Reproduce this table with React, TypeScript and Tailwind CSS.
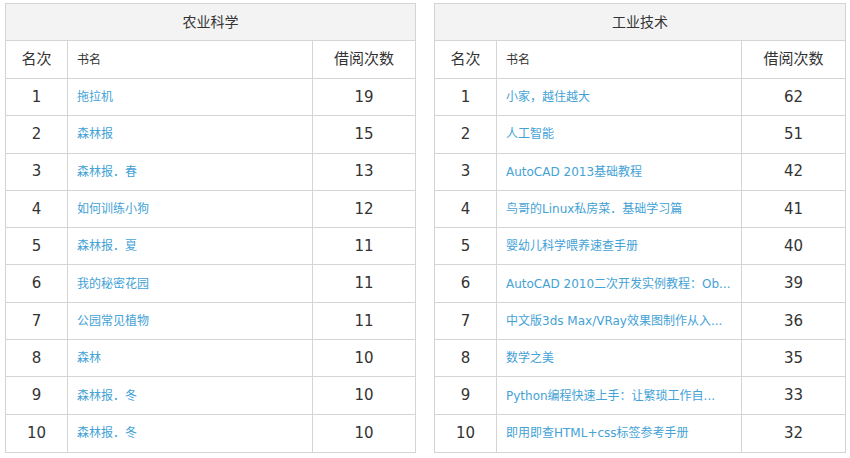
import React from "react";

type Row = [number, string, number];

const agri: Row[] = [
  [1, "拖拉机", 19],
  [2, "森林报", 15],
  [3, "森林报．春", 13],
  [4, "如何训练小狗", 12],
  [5, "森林报．夏", 11],
  [6, "我的秘密花园", 11],
  [7, "公园常见植物", 11],
  [8, "森林", 10],
  [9, "森林报．冬", 10],
  [10, "森林报．冬", 10],
];

const indu: Row[] = [
  [1, "小家，越住越大", 62],
  [2, "人工智能", 51],
  [3, "AutoCAD 2013基础教程", 42],
  [4, "鸟哥的Linux私房菜．基础学习篇", 41],
  [5, "婴幼儿科学喂养速查手册", 40],
  [6, "AutoCAD 2010二次开发实例教程：Ob...", 39],
  [7, "中文版3ds Max/VRay效果图制作从入...", 36],
  [8, "数学之美", 35],
  [9, "Python编程快速上手：让繁琐工作自...", 33],
  [10, "即用即查HTML+css标签参考手册", 32],
];

const font = { fontFamily: "Tahoma, 'DejaVu Sans', 'Noto Sans CJK SC', sans-serif" };

function Table({ title, rows, w }: { title: string; rows: Row[]; w: string }) {
  return (
    <div className={`${w} border border-[#d4d4d4] text-[#333]`}>
      <div className="h-[37px] border-b border-[#d4d4d4] bg-[#f3f3f3] flex items-center justify-center text-[14px]">
        {title}
      </div>
      <div className="h-[38px] border-b border-[#d4d4d4] flex text-[15px]">
        <div className="w-[62px] border-r border-[#d4d4d4] flex items-center justify-center">名次</div>
        <div className="w-[245px] border-r border-[#d4d4d4] flex items-center pl-[9px] text-[12px]">书名</div>
        <div className="flex-1 flex items-center justify-center">借阅次数</div>
      </div>
      {rows.map((r, i) => (
        <div
          key={i}
          className={`h-[37.3px] flex ${i < rows.length - 1 ? "border-b border-[#d4d4d4]" : ""}`}
        >
          <div className="w-[62px] border-r border-[#d4d4d4] flex items-center justify-center text-[15px]">{r[0]}</div>
          <div className="w-[245px] border-r border-[#d4d4d4] flex items-center pl-[9px] text-[12px] text-[#44a2d6] whitespace-nowrap overflow-hidden">
            {r[1]}
          </div>
          <div className="flex-1 flex items-center justify-center text-[15px]">{r[2]}</div>
        </div>
      ))}
    </div>
  );
}

export default function App() {
  return (
    <div className="w-[850px] h-[458px] bg-white pt-[3px] pl-[5px] flex items-start gap-[18px]" style={font}>
      <Table title="农业科学" rows={agri} w="w-[411px]" />
      <Table title="工业技术" rows={indu} w="w-[412px]" />
    </div>
  );
}
